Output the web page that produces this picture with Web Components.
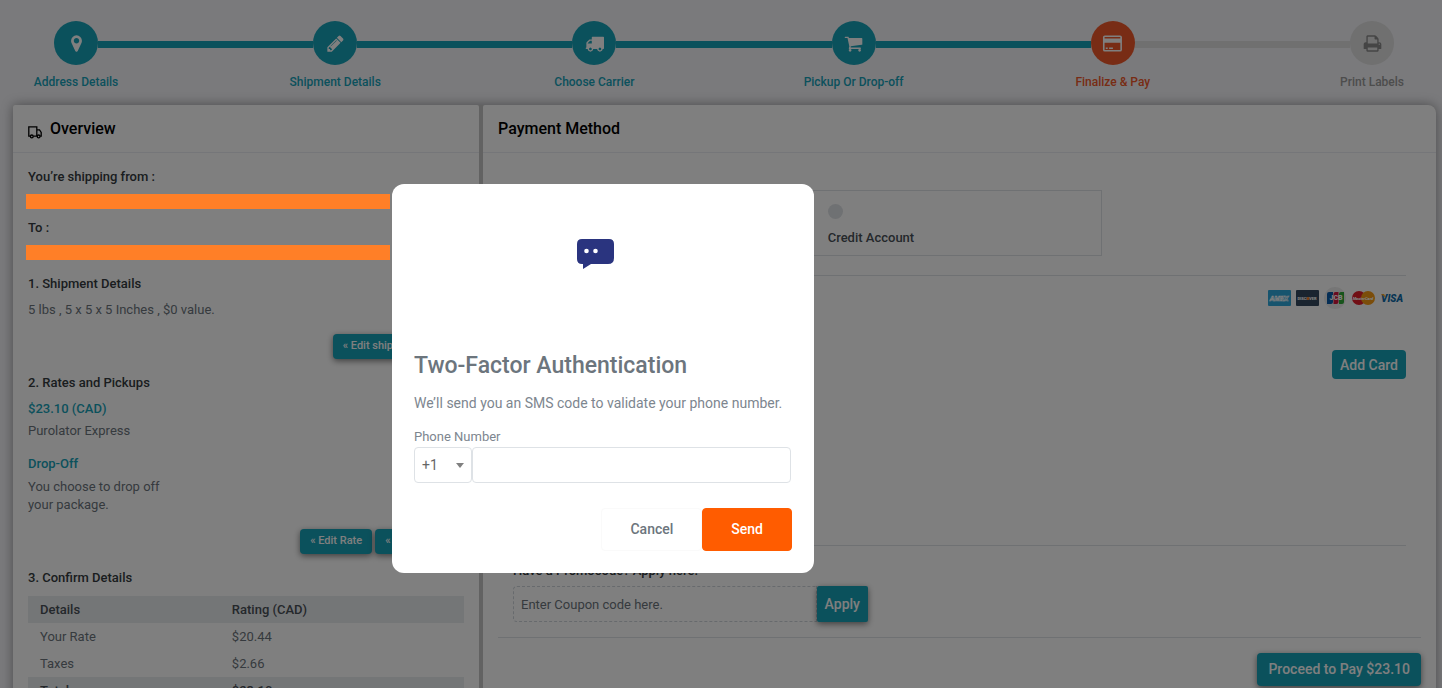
<!DOCTYPE html>
<html lang="en">
<head>
<meta charset="utf-8">
<meta name="viewport" content="width=device-width, initial-scale=1">
<title>Finalize &amp; Pay</title>
<style>
  :root {
    --teal: #17a2b8;
    --muted: #6c757d;
    --dark: #343a40;
    --line: #dee2e6;
  }

  body {
    margin: 0;
    overflow: hidden;
    background: #f4f4f8;
    color: var(--muted);
    font: 14px/20px Roboto, "Liberation Sans", sans-serif;
  }
</style>
</head>
<body>
<checkout-page></checkout-page>
<two-factor-modal></two-factor-modal>

<script>
  const icons = {
    marker: '<svg viewBox="0 0 1792 1792"><path d="M1152 640q0-106-75-181t-181-75-181 75-75 181 75 181 181 75 181-75 75-181zm256 0q0 109-33 179l-364 774q-16 33-47.500 52t-67.500 19-67.500-19-46.500-52l-365-774q-33-70-33-179 0-212 150-362t362-150 362 150 150 362z"/></svg>',
    pencil: '<svg viewBox="0 0 1792 1792"><path d="M491 1536l91-91-235-235-91 91v107h128v128h107zm523-928q0-22-22-22-10 0-17 7l-542 542q-7 7-7 17 0 22 22 22 10 0 17-7l542-542q7-7 7-17zm-54-192l416 416-832 832h-416v-416zm683 96q0 53-37 90l-166 166-416-416 166-165q36-38 90-38 53 0 91 38l235 234q37 39 37 91z"/></svg>',
    truck: '<svg viewBox="0 0 1792 1792"><path d="M640 1408q0-52-38-90t-90-38-90 38-38 90 38 90 90 38 90-38 38-90zm-384-512h384v-256h-158q-13 0-22 9l-195 195q-9 9-9 22v30zm1280 512q0-52-38-90t-90-38-90 38-38 90 38 90 90 38 90-38 38-90zm256-1088v1024q0 15-4 26.500t-13.500 18.500-16.500 11.500-23.500 6-22.500 2-25.500 0-22.500-.5q0 106-75 181t-181 75-181-75-75-181h-384q0 106-75 181t-181 75-181-75-75-181h-64q-3 0-22.500.5t-25.500 0-22.500-2-23.500-6-16.500-11.500-13.500-18.500-4-26.500q0-26 19-45t45-19v-320q0-8-.5-35t0-38 2.500-34.500 6.500-37 14-30.500 22.500-30l198-198q19-19 50.500-32t58.500-13h160v-192q0-26 19-45t45-19h1024q26 0 45 19t19 45z"/></svg>',
    cart: '<svg viewBox="0 0 1792 1792"><path d="M704 1536q0 52-38 90t-90 38-90-38-38-90 38-90 90-38 90 38 38 90zm896 0q0 52-38 90t-90 38-90-38-38-90 38-90 90-38 90 38 38 90zm128-1088v512q0 24-16.500 42.500t-40.500 21.500l-1044 122q13 60 13 70 0 16-24 64h920q26 0 45 19t19 45-19 45-45 19h-1024q-26 0-45-19t-19-45q0-11 8-31.500t16-36 21.500-40 15.500-29.500l-177-823h-204q-26 0-45-19t-19-45 19-45 45-19h256q16 0 28.500 6.500t19.500 15.500 13 24.500 8 26 5.500 29.500 4.500 26h1201q26 0 45 19t19 45z"/></svg>',
    card: '<svg viewBox="0 0 22 20"><path fill-rule="evenodd" d="M3 1.500h16a2 2 0 0 1 2 2v13a2 2 0 0 1-2 2H3a2 2 0 0 1-2-2v-13a2 2 0 0 1 2-2zM2.700 3.200v1.600h16.600V3.200zM2.700 9.300v7.500h16.600V9.300zM4 14.300h2v1.400H4zM7.500 14.300h4v1.400h-4z"/></svg>',
    print: '<svg viewBox="0 0 1792 1792"><path d="M448 1536h896v-256h-896v256zm0-640h896v-384h-160q-40 0-68-28t-28-68v-160h-640v640zm1152 64q0-26-19-45t-45-19-45 19-19 45 19 45 45 19 45-19 19-45zm128 0v416q0 13-9.500 22.500t-22.500 9.500h-224v160q0 40-28 68t-68 28h-960q-40 0-68-28t-28-68v-160h-224q-13 0-22.500-9.500t-9.500-22.500v-416q0-79 56.500-135.500t135.500-56.500h64v-544q0-40 28-68t68-28h672q40 0 88 20t76 48l152 152q28 28 48 76t20 88v256h64q79 0 135.500 56.500t56.500 135.500z"/></svg>',
  };

  class ProgressStep extends HTMLElement {
    constructor() {
      super();
      this.attachShadow({ mode: 'open' });
    }

    connectedCallback() {
      this.shadowRoot.innerHTML = `
        <style>
          :host {
            display: flex;
            flex-direction: column;
            align-items: center;
            width: 44px;
            flex: none;
            color: var(--teal);
            --circle: var(--teal);
            --icon: #fff;
          }

          :host([state="active"]) {
            color: #f1592a;
            --circle: #f1592a;
          }

          :host([state="todo"]) {
            color: #9a9a9a;
            --circle: #e0e0e0;
            --icon: #8a8a8a;
          }

          .circle {
            display: flex;
            align-items: center;
            justify-content: center;
            width: 44px;
            height: 44px;
            border-radius: 50%;
            background: var(--circle);
          }

          svg {
            height: 19px;
            fill: var(--icon);
          }

          .label {
            margin-top: 7px;
            font-size: 12px;
            font-weight: 500;
            white-space: nowrap;
          }
        </style>
        <div class="circle">${icons[this.getAttribute('icon')]}</div>
        <div class="label"><slot></slot></div>
      `;
    }
  }

  class StepProgress extends HTMLElement {
    constructor() {
      super();
      this.attachShadow({ mode: 'open' });
    }

    connectedCallback() {
      this.shadowRoot.innerHTML = `
        <style>
          :host {
            display: flex;
            padding: 21px 48px 13px 54px;
          }

          .bar {
            flex: 1;
            height: 7px;
            margin-top: 20px;
            background: var(--teal);
          }

          .bar.todo {
            background: #e0e0e0;
          }
        </style>
        <progress-step icon="marker">Address Details</progress-step>
        <div class="bar"></div>
        <progress-step icon="pencil">Shipment Details</progress-step>
        <div class="bar"></div>
        <progress-step icon="truck">Choose Carrier</progress-step>
        <div class="bar"></div>
        <progress-step icon="cart">Pickup Or Drop-off</progress-step>
        <div class="bar"></div>
        <progress-step icon="card" state="active">Finalize &amp; Pay</progress-step>
        <div class="bar todo"></div>
        <progress-step icon="print" state="todo">Print Labels</progress-step>
      `;
    }
  }

  class TealButton extends HTMLElement {
    constructor() {
      super();
      this.attachShadow({ mode: 'open' });
    }

    connectedCallback() {
      this.shadowRoot.innerHTML = `
        <style>
          :host {
            display: inline-flex;
          }

          button {
            padding: 0 8px;
            height: 29px;
            border: 0;
            border-radius: 4px;
            background: var(--teal);
            color: #fff;
            font: 500 14px/20px Roboto, sans-serif;
            white-space: nowrap;
            cursor: pointer;
          }

          :host([size="small"]) button {
            height: 25px;
            padding: 0 10px 2px;
            font-size: 11px;
            box-shadow: 0 2px 6px rgba(0, 0, 0, 0.5);
          }

          :host([size="field"]) button {
            height: 36px;
            border-radius: 2px;
            box-shadow: 0 2px 6px rgba(0, 0, 0, 0.5);
          }

          :host([size="large"]) button {
            height: 33px;
            padding: 0 11px 2px;
            box-shadow: 0 2px 6px rgba(0, 0, 0, 0.5);
          }
        </style>
        <button type="button"><slot></slot></button>
      `;
    }
  }

  class PanelCard extends HTMLElement {
    constructor() {
      super();
      this.attachShadow({ mode: 'open' });
    }

    connectedCallback() {
      this.shadowRoot.innerHTML = `
        <style>
          :host {
            display: block;
            background: #fff;
            border-radius: 2px;
          }

          header {
            display: flex;
            align-items: center;
            gap: 8px;
            height: 47px;
            padding: 0 15px;
            border-bottom: 1px solid #ebedf2;
          }

          h2 {
            margin: 0;
            color: #000;
            font-size: 16px;
            line-height: 20px;
            font-weight: 500;
          }

          ::slotted(svg) {
            margin-top: 6px;
          }
        </style>
        <header>
          <slot name="icon"></slot>
          <h2>${this.getAttribute('heading')}</h2>
        </header>
        <slot></slot>
      `;
    }
  }

  class OverviewPanel extends HTMLElement {
    constructor() {
      super();
      this.attachShadow({ mode: 'open' });
    }

    connectedCallback() {
      this.shadowRoot.innerHTML = `
        <style>
          :host {
            display: block;
            font-size: 13px;
            line-height: 18px;
          }

          panel-card {
            min-height: 100%;
          }

          .content {
            padding: 15px;
          }

          h3 {
            margin: 0;
            color: var(--dark);
            font-size: 13px;
            line-height: 18px;
            font-weight: 500;
          }

          p {
            margin: 0;
          }

          .cover {
            position: relative;
            z-index: 11;
            height: 15px;
            margin: 8px 74px 10px -2px;
            background: #ff7f27;
          }

          .accent {
            color: var(--teal);
            font-weight: 500;
          }

          .actions {
            display: flex;
            justify-content: flex-end;
            gap: 3px;
          }

          table {
            width: 100%;
            margin-top: 9px;
            table-layout: fixed;
            border-collapse: collapse;
            text-align: left;
          }

          th, td {
            height: 27px;
            padding: 0 12px;
          }

          th:first-child, td:first-child {
            width: 44%;
            box-sizing: border-box;
          }

          th {
            background: #e9ecef;
            color: #495057;
            font-weight: 500;
          }
        </style>
        <panel-card heading="Overview">
          <svg slot="icon" width="14" height="14" viewBox="0 0 14 14" fill="none" stroke="#000" stroke-width="1.300">
            <path d="M2.300 11.200H.8V1.800h8v9.400H5.300M8.800 4.800h2.700L13.200 7.500v3.700h-1.100M9.200 11.200h-.4"/>
            <circle cx="3.800" cy="11.400" r="1.400"/>
            <circle cx="10.600" cy="11.400" r="1.400"/>
          </svg>
          <div class="content">
            <h3>You’re shipping from :</h3>
            <div class="cover"></div>
            <h3>To :</h3>
            <div class="cover"></div>

            <h3 style="margin-top: 15px">1. Shipment Details</h3>
            <p style="margin-top: 8px">5 lbs , 5 x 5 x 5 Inches , $0 value.</p>
            <div class="actions" style="margin-top: 15px">
              <teal-button size="small">« Edit shipment details</teal-button>
            </div>

            <h3 style="margin-top: 15px">2. Rates and Pickups</h3>
            <p class="accent" style="margin-top: 8px">$23.10 (CAD)</p>
            <p style="margin-top: 4px">Purolator Express</p>
            <p class="accent" style="margin-top: 15px">Drop-Off</p>
            <p style="margin-top: 5px">You choose to drop off<br>your package.</p>
            <div class="actions" style="margin-top: 15px">
              <teal-button size="small">« Edit Rate</teal-button>
              <teal-button size="small">« Edit Pickups</teal-button>
            </div>

            <h3 style="margin-top: 15px">3. Confirm Details</h3>
            <table>
              <thead>
                <tr><th>Details</th><th>Rating (CAD)</th></tr>
              </thead>
              <tbody>
                <tr><td>Your Rate</td><td>$20.44</td></tr>
                <tr><td>Taxes</td><td>$2.66</td></tr>
              </tbody>
              <tfoot>
                <tr><th>Total</th><th>$23.10</th></tr>
              </tfoot>
            </table>
          </div>
        </panel-card>
      `;
    }
  }

  class CardBrands extends HTMLElement {
    constructor() {
      super();
      this.attachShadow({ mode: 'open' });
    }

    connectedCallback() {
      this.shadowRoot.innerHTML = `
        <style>
          :host {
            display: flex;
            align-items: center;
            gap: 5px;
            padding-right: 3px;
          }

          svg {
            width: 23px;
            height: 24px;
            font-family: Roboto, sans-serif;
            font-weight: 900;
            text-anchor: middle;
          }
        </style>
        <svg viewBox="0 0 23 24">
          <rect y="4" width="23" height="16" rx="1" fill="#2fa8dc"/>
          <text x="11" y="15" font-size="7" font-style="italic" fill="#2fa8dc" stroke="#fff" stroke-width=".6">AMEX</text>
        </svg>
        <svg viewBox="0 0 23 24">
          <rect y="4" width="23" height="16" rx="1" fill="#34495e"/>
          <text x="11" y="14" font-size="4" fill="#fff">DISCOVER</text>
          <circle cx="12" cy="12.500" r="1.500" fill="#f47b20"/>
        </svg>
        <svg viewBox="0 0 23 24">
          <circle cx="11" cy="12" r="11" fill="#ededed"/>
          <path fill="#0b5cab" d="M3 8q0-2 2-2h4v10q0 2-2 2H3z"/>
          <path fill="#d3163f" d="M9.500 8q0-2 2-2h3v10q0 2-2 2h-3z"/>
          <path fill="#2ea836" d="M15 8q0-2 2-2h3v10q0 2-2 2h-3z"/>
          <text x="12" y="14" font-size="7" fill="#fff">JCB</text>
        </svg>
        <svg viewBox="0 0 23 24">
          <circle cx="7" cy="12" r="7" fill="#e21f2b"/>
          <circle cx="16" cy="12" r="7" fill="#f79a15"/>
          <text x="11" y="14" font-size="4" font-style="italic" fill="#fff">MasterCard</text>
        </svg>
        <svg viewBox="0 0 23 24">
          <text x="12" y="16" font-size="10" font-style="italic" fill="#0e6aa8">VISA</text>
          <path fill="#f5a623" d="M1 8h3l2 4z"/>
        </svg>
      `;
    }
  }

  class PaymentPanel extends HTMLElement {
    constructor() {
      super();
      this.attachShadow({ mode: 'open' });
    }

    connectedCallback() {
      this.shadowRoot.innerHTML = `
        <style>
          :host {
            display: block;
          }

          panel-card {
            min-height: 100%;
            border-radius: 2px 8px 0 0;
          }

          .content {
            display: flex;
            flex-direction: column;
            padding: 37px 30px 15px;
          }

          .options {
            display: grid;
            grid-template-columns: 1fr 1fr;
            gap: 8px;
            width: 66%;
          }

          .option {
            display: flex;
            flex-direction: column;
            align-items: flex-start;
            gap: 9px;
            padding: 13px 15px 7px;
            border: 1px solid var(--line);
            color: #495057;
            font-size: 13px;
            font-weight: 500;
          }

          input[type="radio"] {
            appearance: none;
            width: 15px;
            height: 15px;
            margin: 0;
            border-radius: 50%;
            background: #dfe2e6;
          }

          input[type="radio"]:checked {
            background: var(--teal);
          }

          .wallet {
            display: flex;
            flex-direction: column;
            align-items: flex-end;
            gap: 40px;
            min-height: 259px;
            margin-top: 19px;
            padding-top: 10px;
            border-top: 1px solid var(--line);
            border-bottom: 1px solid var(--line);
          }

          .promo-label {
            margin-top: 15px;
            color: var(--dark);
            font-size: 13px;
            font-weight: 500;
          }

          .promo {
            display: flex;
            margin-top: 5px;
          }

          .promo input {
            box-sizing: border-box;
            width: 34%;
            height: 36px;
            padding: 0 7px;
            border: 1px dashed #ced4da;
            border-radius: 4px 0 0 4px;
            background: #fff;
            font: 13px Roboto, sans-serif;
          }

          .promo input::placeholder {
            color: var(--muted);
          }

          .pay {
            display: flex;
            justify-content: flex-end;
            margin: 15px -15px 0;
            padding-top: 15px;
            border-top: 1px solid var(--line);
          }
        </style>
        <panel-card heading="Payment Method">
          <div class="content">
            <div class="options">
              <label class="option"><input type="radio" name="method" checked>Credit Card</label>
              <label class="option"><input type="radio" name="method">Credit Account</label>
            </div>
            <div class="wallet">
              <card-brands></card-brands>
              <teal-button>Add Card</teal-button>
            </div>
            <label class="promo-label" for="coupon">Have a Promocode? Apply here.</label>
            <div class="promo">
              <input id="coupon" type="text" placeholder="Enter Coupon code here.">
              <teal-button size="field">Apply</teal-button>
            </div>
            <div class="pay">
              <teal-button size="large">Proceed to Pay $23.10</teal-button>
            </div>
          </div>
        </panel-card>
      `;
    }
  }

  class CheckoutPage extends HTMLElement {
    constructor() {
      super();
      this.attachShadow({ mode: 'open' });
    }

    connectedCallback() {
      this.shadowRoot.innerHTML = `
        <style>
          :host {
            display: block;
          }

          main {
            display: flex;
            gap: 4px;
            margin: 0 6px 0 13px;
            border-radius: 2px 8px 0 0;
            background: #c4c4c4;
            box-shadow: 0 0 12px rgba(0, 0, 0, 0.4);
          }

          overview-panel {
            flex: 466;
          }

          payment-panel {
            flex: 953;
          }
        </style>
        <step-progress></step-progress>
        <main>
          <overview-panel></overview-panel>
          <payment-panel></payment-panel>
        </main>
      `;
    }
  }

  class TwoFactorModal extends HTMLElement {
    constructor() {
      super();
      this.attachShadow({ mode: 'open' });
    }

    connectedCallback() {
      this.shadowRoot.innerHTML = `
        <style>
          .backdrop {
            position: fixed;
            inset: 0;
            z-index: 10;
            background: rgba(0, 0, 0, 0.5);
          }

          .modal {
            position: fixed;
            z-index: 12;
            top: 184px;
            left: calc(50% - 329px);
            box-sizing: border-box;
            width: 422px;
            padding: 55px 22px 22px;
            border-radius: 12px;
            background: #fff;
          }

          .bubble {
            display: block;
            margin: 0 auto 81px;
            padding-right: 15px;
          }

          h1 {
            margin: 0;
            font-size: 23px;
            line-height: 32px;
            font-weight: 500;
          }

          p {
            margin: 11px 0 0;
            color: #7d868f;
          }

          label {
            display: block;
            margin-top: 14px;
            color: #7d868f;
            font-size: 13px;
          }

          .phone {
            display: flex;
            padding-right: 1px;
          }

          .code {
            position: relative;
            flex: none;
          }

          /* drop-down arrow over the select */
          .code::after {
            content: "";
            position: absolute;
            top: 16px;
            right: 8px;
            border: 4px solid transparent;
            border-top: 5px solid #808080;
            border-bottom: 0;
            pointer-events: none;
          }

          select, input {
            box-sizing: border-box;
            height: 36px;
            padding: 0 7px;
            border: 1px solid var(--line);
            border-radius: 4px;
            background: #fff;
            color: #666;
            font: 14px Roboto, sans-serif;
          }

          select {
            appearance: none;
            display: block;
            width: 58px;
          }

          input {
            flex: 1;
            min-width: 0;
          }

          .actions {
            display: flex;
            justify-content: flex-end;
            margin-top: 25px;
          }

          button {
            height: 43px;
            padding: 0 28px 2px;
            border: 1px solid #fafafa;
            border-radius: 4px;
            background: #fff;
            color: var(--muted);
            font: 500 14px/20px Roboto, sans-serif;
            cursor: pointer;
          }

          .send {
            border-color: #ff5c00;
            background: #ff5c00;
            color: #fff;
          }
        </style>
        <div class="backdrop"></div>
        <div class="modal" role="dialog" aria-modal="true" aria-labelledby="title">
          <svg class="bubble" width="37" height="30" viewBox="0 0 37 30">
            <path fill="#2a347f" d="M5 0h27q5 0 5 5v14q0 6-6 6H14l-8 5v-5H5q-5 0-5-5V5q0-5 5-5z"/>
            <circle cx="9.500" cy="12" r="2.300" fill="#fff"/>
            <circle cx="18.500" cy="12" r="2.300" fill="#fff"/>
          </svg>
          <h1 id="title">Two-Factor Authentication</h1>
          <p>We’ll send you an SMS code to validate your phone number.</p>
          <label for="phone">Phone Number</label>
          <div class="phone">
            <div class="code">
              <select aria-label="Country code"><option>+1</option></select>
            </div>
            <input id="phone" type="tel">
          </div>
          <div class="actions">
            <button type="button">Cancel</button>
            <button type="button" class="send">Send</button>
          </div>
        </div>
      `;
    }
  }

  customElements.define('progress-step', ProgressStep);
  customElements.define('step-progress', StepProgress);
  customElements.define('teal-button', TealButton);
  customElements.define('panel-card', PanelCard);
  customElements.define('overview-panel', OverviewPanel);
  customElements.define('card-brands', CardBrands);
  customElements.define('payment-panel', PaymentPanel);
  customElements.define('checkout-page', CheckoutPage);
  customElements.define('two-factor-modal', TwoFactorModal);
</script>
</body>
</html>
